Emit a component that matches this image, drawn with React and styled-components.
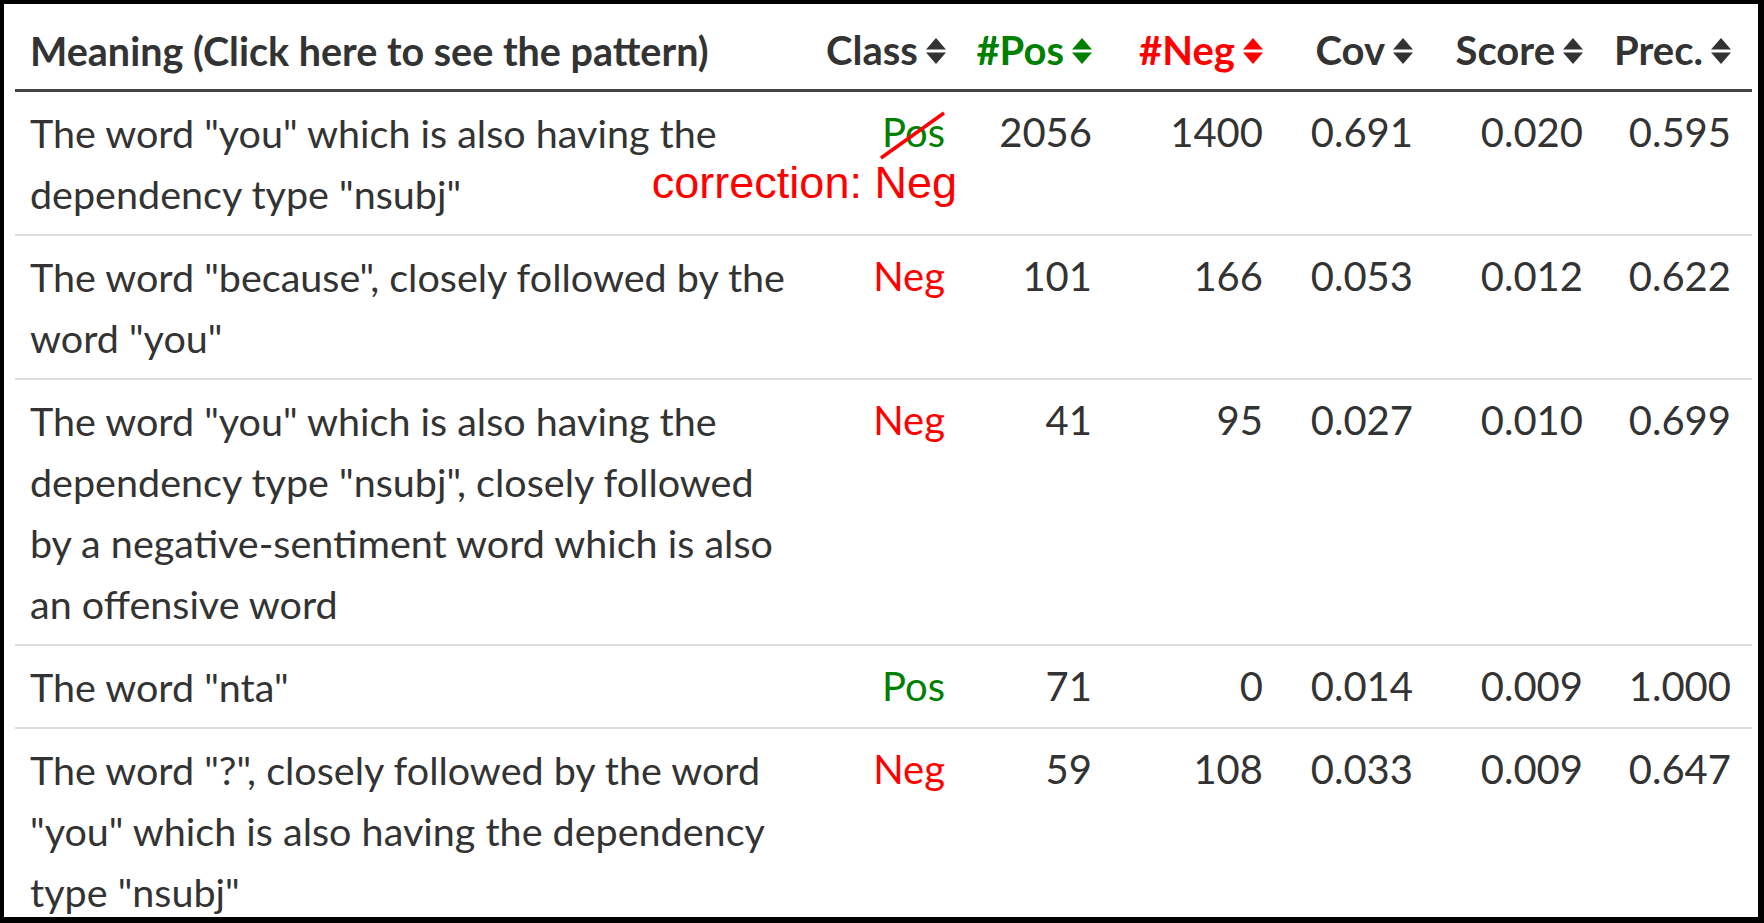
import React from 'react';
import styled, { createGlobalStyle } from 'styled-components';

const GlobalStyle = createGlobalStyle`
  html, body {
    margin: 0;
    padding: 0;
    background: #000;
  }
  body {
    font-family: 'Lato', sans-serif;
  }
`;

const Frame = styled.div`
  box-sizing: border-box;
  width: 1764px;
  height: 923px;
  border-style: solid;
  border-color: #000;
  border-width: 4px 6px 6px 4px;
  background: #fff;
  padding: 6px 6px 0 11px;
  overflow: hidden;
`;

const Table = styled.table`
  width: 100%;
  border-collapse: collapse;
  table-layout: fixed;
  color: #333;
  font-family: 'Lato', sans-serif;
  font-size: 40px;
  line-height: 61px;
`;

const Th = styled.th`
  padding: 10px 15px 8px;
  text-align: ${(p) => p.$align || 'right'};
  font-weight: 700;
  font-size: ${(p) => (p.$text ? '39.5px' : '40px')};
  color: ${(p) => p.$color || '#333'};
  border-bottom: 3px solid #444;
  white-space: nowrap;
  vertical-align: bottom;

  &:last-child {
    padding-right: 21px;
  }
`;

const HeadLabel = styled.span`
  display: inline-flex;
  align-items: center;
  gap: 8px;
`;

const Row = styled.tr`
  border-top: 2px solid #dedede;
`;

const Td = styled.td`
  padding: 10px 15px;
  vertical-align: top;
  text-align: ${(p) => p.$align || 'right'};
  color: ${(p) => p.$color || '#333'};
  font-size: ${(p) => (p.$text ? '39.5px' : '40px')};

  &:last-child {
    padding-right: 21px;
  }
`;

const ClassMark = styled.span`
  position: relative;
  display: inline-block;
`;

const Strike = styled.svg`
  position: absolute;
  right: 0;
  top: 8px;
  width: 66px;
  height: 52px;
  overflow: visible;
`;

const Correction = styled.span`
  position: absolute;
  top: calc(100% - 3px);
  right: -12px;
  white-space: nowrap;
  font-family: 'Liberation Sans', Arial, sans-serif;
  font-size: 45px;
  line-height: 45px;
  color: #ff0000;
`;

const GREEN = '#008000';
const RED = '#ff0000';

const SortIcon = () => (
  <svg width="20" height="28" viewBox="0 0 20 28">
    <polygon points="0,12.5 10,1 20,12.5" fill="currentColor" />
    <polygon points="0,15.5 20,15.5 10,27" fill="currentColor" />
  </svg>
);

const columns = [
  { label: 'Meaning (Click here to see the pattern)', width: 796, align: 'left', sort: false },
  { label: 'Class', width: 149 },
  { label: '#Pos', width: 147, color: GREEN },
  { label: '#Neg', width: 171, color: RED },
  { label: 'Cov', width: 150 },
  { label: 'Score', width: 170 },
  { label: 'Prec.', width: 154 },
];

const rows = [
  {
    meaning: 'The word "you" which is also having the dependency type "nsubj"',
    cls: 'Pos',
    corrected: 'Neg',
    values: ['2056', '1400', '0.691', '0.020', '0.595'],
  },
  {
    meaning: 'The word "because", closely followed by the word "you"',
    cls: 'Neg',
    values: ['101', '166', '0.053', '0.012', '0.622'],
  },
  {
    meaning:
      'The word "you" which is also having the dependency type "nsubj", closely followed by a negative-sentiment word which is also an offensive word',
    cls: 'Neg',
    values: ['41', '95', '0.027', '0.010', '0.699'],
  },
  {
    meaning: 'The word "nta"',
    cls: 'Pos',
    values: ['71', '0', '0.014', '0.009', '1.000'],
  },
  {
    meaning:
      'The word "?", closely followed by the word "you" which is also having the dependency type "nsubj"',
    cls: 'Neg',
    values: ['59', '108', '0.033', '0.009', '0.647'],
  },
];

const App = () => {
  return (
    <Frame>
      <GlobalStyle />
      <Table>
        <colgroup>
          {columns.map((c) => (
            <col key={c.label} style={{ width: c.width }} />
          ))}
        </colgroup>
        <thead>
          <tr>
            {columns.map((c) => (
              <Th key={c.label} $align={c.align} $color={c.color} $text={c.sort === false}>
                {c.sort === false ? (
                  c.label
                ) : (
                  <HeadLabel>
                    {c.label}
                    <SortIcon />
                  </HeadLabel>
                )}
              </Th>
            ))}
          </tr>
        </thead>
        <tbody>
          {rows.map((r) => (
            <Row key={r.meaning}>
              <Td $align="left" $text>
                {r.meaning}
              </Td>
              <Td $color={r.cls === 'Pos' ? GREEN : RED}>
                <ClassMark>
                  {r.cls}
                  {r.corrected && (
                    <>
                      <Strike viewBox="0 0 66 52">
                        <line x1="2" y1="48" x2="65" y2="3" stroke={RED} strokeWidth="3.5" />
                      </Strike>
                      <Correction>correction: {r.corrected}</Correction>
                    </>
                  )}
                </ClassMark>
              </Td>
              {r.values.map((v, i) => (
                <Td key={i}>{v}</Td>
              ))}
            </Row>
          ))}
        </tbody>
      </Table>
    </Frame>
  );
};

export default App;
